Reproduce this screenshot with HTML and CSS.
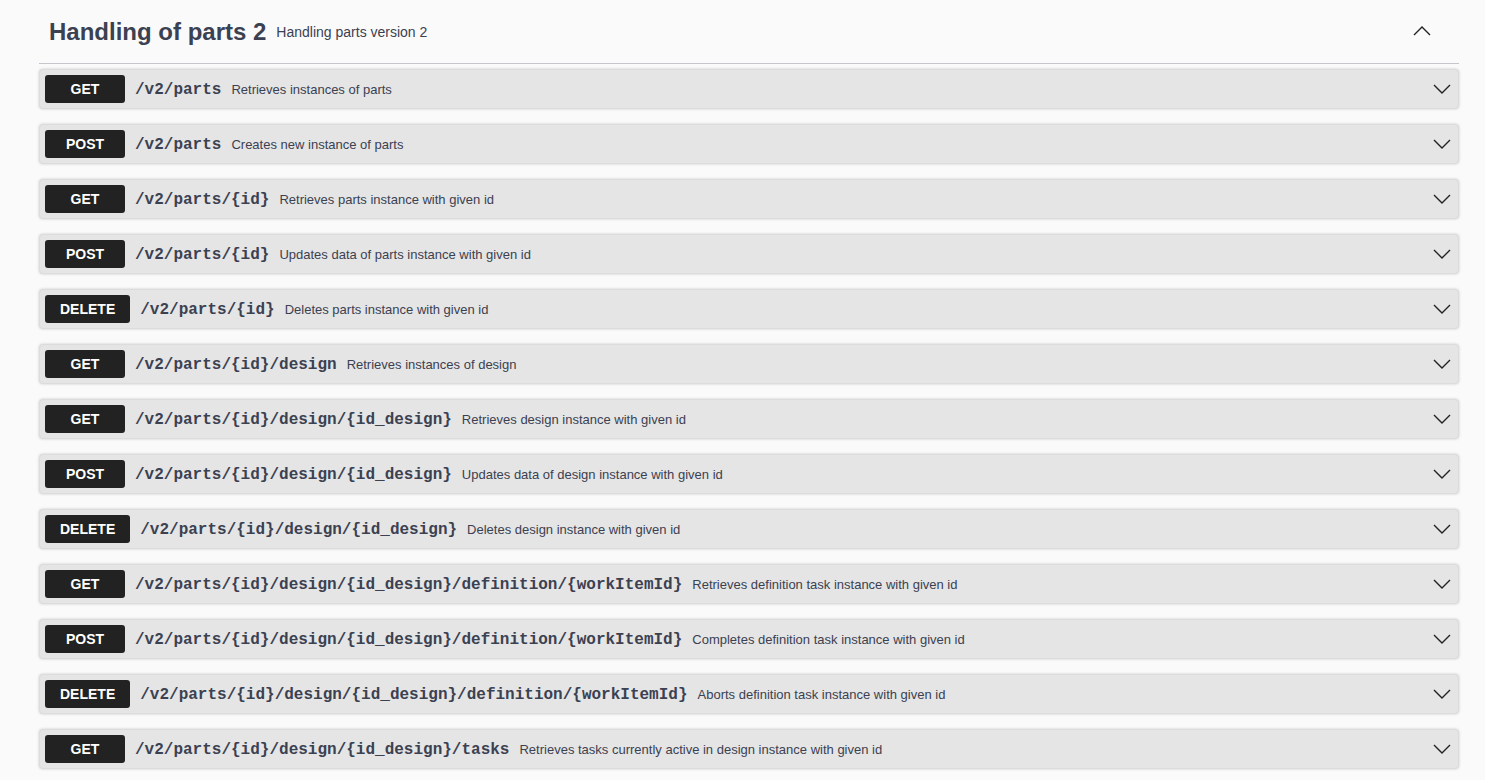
FILE: index.html
```html
<!DOCTYPE html>
<html lang="en">
<head>
<meta charset="utf-8">
<title>Handling of parts 2</title>
<link rel="stylesheet" href="styles.css">
</head>
<body>
<div class="wrapper">
  <section class="tag-section">
    <div class="tag-header">
      <h3 class="tag-title">Handling of parts 2</h3>
      <small class="tag-desc">Handling parts version 2</small>
      <svg class="arrow-up" viewBox="0 0 20 20" width="20" height="20"><polyline points="2,14 10,6 18,14" fill="none" stroke="#222" stroke-width="1.4"/></svg>
    </div>
    <div class="ops">
      <div class="op"><span class="method">GET</span><span class="path">/v2/parts</span><span class="desc">Retrieves instances of parts</span><svg class="arrow" viewBox="0 0 20 20" width="20" height="20"><polyline points="2,6 10,14 18,6" fill="none" stroke="#222" stroke-width="1.4"/></svg></div>
      <div class="op"><span class="method">POST</span><span class="path">/v2/parts</span><span class="desc">Creates new instance of parts</span><svg class="arrow" viewBox="0 0 20 20" width="20" height="20"><polyline points="2,6 10,14 18,6" fill="none" stroke="#222" stroke-width="1.4"/></svg></div>
      <div class="op"><span class="method">GET</span><span class="path">/v2/parts/{id}</span><span class="desc">Retrieves parts instance with given id</span><svg class="arrow" viewBox="0 0 20 20" width="20" height="20"><polyline points="2,6 10,14 18,6" fill="none" stroke="#222" stroke-width="1.4"/></svg></div>
      <div class="op"><span class="method">POST</span><span class="path">/v2/parts/{id}</span><span class="desc">Updates data of parts instance with given id</span><svg class="arrow" viewBox="0 0 20 20" width="20" height="20"><polyline points="2,6 10,14 18,6" fill="none" stroke="#222" stroke-width="1.4"/></svg></div>
      <div class="op"><span class="method">DELETE</span><span class="path">/v2/parts/{id}</span><span class="desc">Deletes parts instance with given id</span><svg class="arrow" viewBox="0 0 20 20" width="20" height="20"><polyline points="2,6 10,14 18,6" fill="none" stroke="#222" stroke-width="1.4"/></svg></div>
      <div class="op"><span class="method">GET</span><span class="path">/v2/parts/{id}/design</span><span class="desc">Retrieves instances of design</span><svg class="arrow" viewBox="0 0 20 20" width="20" height="20"><polyline points="2,6 10,14 18,6" fill="none" stroke="#222" stroke-width="1.4"/></svg></div>
      <div class="op"><span class="method">GET</span><span class="path">/v2/parts/{id}/design/{id_design}</span><span class="desc">Retrieves design instance with given id</span><svg class="arrow" viewBox="0 0 20 20" width="20" height="20"><polyline points="2,6 10,14 18,6" fill="none" stroke="#222" stroke-width="1.4"/></svg></div>
      <div class="op"><span class="method">POST</span><span class="path">/v2/parts/{id}/design/{id_design}</span><span class="desc">Updates data of design instance with given id</span><svg class="arrow" viewBox="0 0 20 20" width="20" height="20"><polyline points="2,6 10,14 18,6" fill="none" stroke="#222" stroke-width="1.4"/></svg></div>
      <div class="op"><span class="method">DELETE</span><span class="path">/v2/parts/{id}/design/{id_design}</span><span class="desc">Deletes design instance with given id</span><svg class="arrow" viewBox="0 0 20 20" width="20" height="20"><polyline points="2,6 10,14 18,6" fill="none" stroke="#222" stroke-width="1.4"/></svg></div>
      <div class="op"><span class="method">GET</span><span class="path">/v2/parts/{id}/design/{id_design}/definition/{workItemId}</span><span class="desc">Retrieves definition task instance with given id</span><svg class="arrow" viewBox="0 0 20 20" width="20" height="20"><polyline points="2,6 10,14 18,6" fill="none" stroke="#222" stroke-width="1.4"/></svg></div>
      <div class="op"><span class="method">POST</span><span class="path">/v2/parts/{id}/design/{id_design}/definition/{workItemId}</span><span class="desc">Completes definition task instance with given id</span><svg class="arrow" viewBox="0 0 20 20" width="20" height="20"><polyline points="2,6 10,14 18,6" fill="none" stroke="#222" stroke-width="1.4"/></svg></div>
      <div class="op"><span class="method">DELETE</span><span class="path">/v2/parts/{id}/design/{id_design}/definition/{workItemId}</span><span class="desc">Aborts definition task instance with given id</span><svg class="arrow" viewBox="0 0 20 20" width="20" height="20"><polyline points="2,6 10,14 18,6" fill="none" stroke="#222" stroke-width="1.4"/></svg></div>
      <div class="op"><span class="method">GET</span><span class="path">/v2/parts/{id}/design/{id_design}/tasks</span><span class="desc">Retrieves tasks currently active in design instance with given id</span><svg class="arrow" viewBox="0 0 20 20" width="20" height="20"><polyline points="2,6 10,14 18,6" fill="none" stroke="#222" stroke-width="1.4"/></svg></div>
    </div>
  </section>
</div>
</body>
</html>
```

FILE: styles.css
```css
html, body {
  margin: 0;
  padding: 0;
  background: #fafafa;
  font-family: "Liberation Sans", Arial, sans-serif;
  color: #3b4151;
}
.wrapper {
  padding: 0 26px 0 39px;
}
.tag-header {
  display: flex;
  align-items: center;
  height: 64px;
  box-sizing: border-box;
  padding: 0 27px 0 10px;
  border-bottom: 1px solid #c4c6cb;
  margin-bottom: 5px;
}
.tag-title {
  margin: 0;
  font-size: 24px;
  font-weight: 700;
  color: #3b4151;
}
.tag-desc {
  font-size: 14px;
  padding: 0 10px;
  color: #3b4151;
  flex: 1;
}
.arrow-up {
  display: block;
  margin-top: -2px;
}
.op {
  display: flex;
  align-items: center;
  height: 40px;
  box-sizing: border-box;
  padding: 0 6px 0 5px;
  margin-bottom: 15px;
  background: #e5e5e5;
  border: 1px solid #dcdcdc;
  border-radius: 4px;
  box-shadow: 0 0 3px rgba(0, 0, 0, 0.19);
}
.method {
  min-width: 80px;
  box-sizing: border-box;
  height: 28px;
  line-height: 28px;
  padding: 0 15px;
  border-radius: 3px;
  background: #222;
  color: #fff;
  font-size: 14px;
  font-weight: 700;
  text-align: center;
}
.path {
  font-family: "Liberation Mono", "Courier New", monospace;
  font-size: 16px;
  font-weight: 700;
  color: #3b4151;
  padding: 2px 10px 0;
}
.desc {
  font-size: 13px;
  color: #3b4151;
  flex: 1;
}
.arrow {
  display: block;
}
```
